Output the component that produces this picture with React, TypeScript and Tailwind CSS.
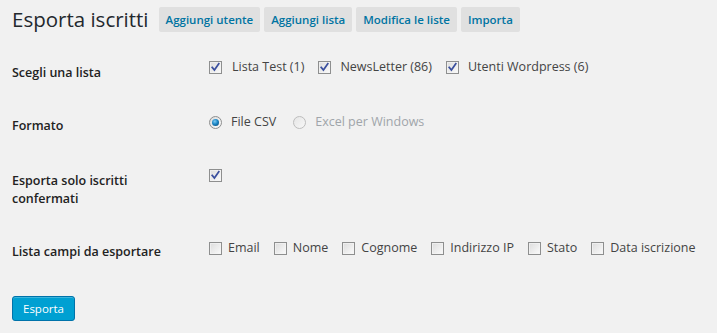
import * as React from "react";

function Checkbox({ checked = false }: { checked?: boolean }) {
  return (
    <span className="relative inline-block w-[13px] h-[13px] shrink-0 border border-[#8e8f8f] bg-gradient-to-br from-[#dcdcdc] to-[#fbfbfb]">
      <span className="absolute inset-0 border border-[#f4f4f4]/70" />
      {checked && (
        <svg viewBox="0 0 11 11" className="absolute inset-0 w-[11px] h-[11px]">
          <path
            d="M2.2 5.4 L4.4 8 L8.8 1.8"
            fill="none"
            stroke="#3a4f9e"
            strokeWidth="1.7"
            strokeLinecap="square"
          />
        </svg>
      )}
    </span>
  );
}

function Radio({ checked = false, disabled = false }: { checked?: boolean; disabled?: boolean }) {
  return (
    <span
      className={`relative inline-flex items-center justify-center w-[13px] h-[13px] shrink-0 rounded-full border ${
        disabled
          ? "border-[#bdbdbd] bg-gradient-to-br from-[#e6e6e6] to-[#f7f7f7]"
          : "border-[#8e8f8f] bg-gradient-to-br from-[#dcdcdc] to-[#fbfbfb]"
      }`}
    >
      {checked && (
        <span className="w-[7px] h-[7px] rounded-full bg-[radial-gradient(circle_at_40%_35%,#7fcaf2_0%,#1a86c6_45%,#0a3f66_100%)]" />
      )}
    </span>
  );
}

function Opt({
  children,
  gap = "gap-[6px]",
  muted = false,
}: {
  children: React.ReactNode;
  gap?: string;
  muted?: boolean;
}) {
  return (
    <label
      className={`flex items-center whitespace-nowrap ${gap} ${muted ? "text-[#a0a5aa]" : "text-[#444]"}`}
    >
      {children}
    </label>
  );
}

export default function App() {
  const campi = ["Email", "Nome", "Cognome", "Indirizzo IP", "Stato", "Data iscrizione"];
  const th = "w-[197px] shrink-0 pt-[20px] text-[12.5px] font-semibold text-[#222]";

  return (
    <div
      className="w-full h-[333px] bg-[#f1f1f1] px-3 overflow-hidden"
      style={{ fontFamily: '"Open Sans", "Liberation Sans", sans-serif' }}
    >
      <div className="flex items-center pt-[5px] h-[34px]">
        <h2 className="text-[20.5px] leading-[29px] text-[#23282d] font-normal">Esporta iscritti</h2>
        <div className="flex items-center gap-1 ml-[10px]">
          {["Aggiungi utente", "Aggiungi lista", "Modifica le liste", "Importa"].map((b) => (
            <a
              key={b}
              className="h-[25px] flex items-center px-[7px] rounded-[2px] bg-[#e0e0e0] text-[11.5px] font-semibold text-[#0074a2]"
            >
              {b}
            </a>
          ))}
        </div>
      </div>

      <div className="pt-[10px] text-[12.5px] leading-[18px]">
        <div className="flex h-[53px]">
          <div className={th}>Scegli una lista</div>
          <div className="flex items-center gap-[14px] pt-[14px] self-start">
            <Opt gap="gap-[10px]">
              <Checkbox checked />
              Lista Test (1)
            </Opt>
            <Opt gap="gap-[9px]">
              <Checkbox checked />
              NewsLetter (86)
            </Opt>
            <Opt gap="gap-[9px]">
              <Checkbox checked />
              Utenti Wordpress (6)
            </Opt>
          </div>
        </div>

        <div className="flex h-[55px]">
          <div className={th}>Formato</div>
          <div className="flex items-center gap-[17px] pt-[16px] self-start">
            <Opt gap="gap-[9px]">
              <Radio checked />
              File CSV
            </Opt>
            <Opt gap="gap-[9px]" muted>
              <Radio disabled />
              Excel per Windows
            </Opt>
          </div>
        </div>

        <div className="flex h-[71px]">
          <div className={th}>
            Esporta solo iscritti
            <br />
            confermati
          </div>
          <div className="pt-[17px]">
            <Checkbox checked />
          </div>
        </div>

        <div className="flex h-[73px]">
          <div className={th}>Lista campi da esportare</div>
          <div className="flex items-center gap-[14px] pt-[16px] self-start">
            {campi.map((c) => (
              <Opt key={c}>
                <Checkbox />
                {c}
              </Opt>
            ))}
          </div>
        </div>

        <button className="h-[25px] px-[10px] rounded-[3px] border border-[#0073aa] bg-[#00a0d2] text-white text-[11.5px] shadow-[inset_0_1px_0_rgba(120,200,230,0.5)]">
          Esporta
        </button>
      </div>
    </div>
  );
}
